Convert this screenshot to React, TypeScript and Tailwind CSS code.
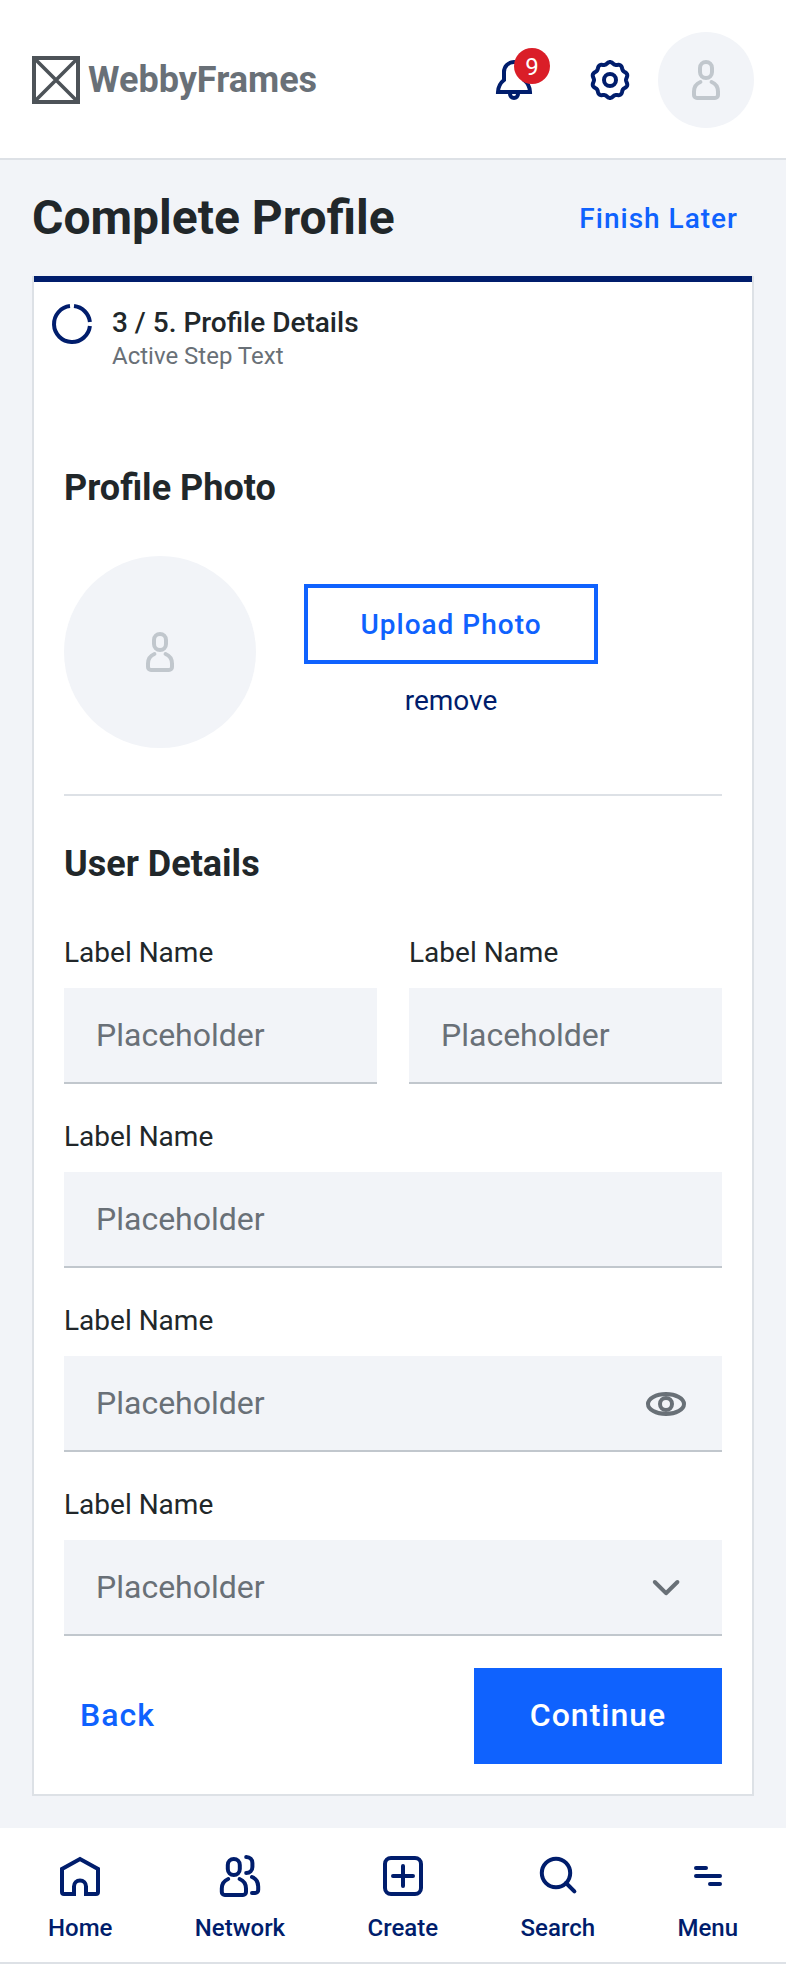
import type { ReactNode } from "react";

function Icon({ children, className = "" }: { children: ReactNode; className?: string }) {
  return (
    <svg
      viewBox="0 0 24 24"
      className={`size-12 shrink-0 ${className}`}
      fill="none"
      stroke="currentColor"
      strokeWidth={2}
    >
      {children}
    </svg>
  );
}

function UserIcon() {
  return (
    <Icon className="text-[#c1c7cd]">
      <rect x="9" y="3" width="6" height="8" rx="3" />
      <path
        strokeLinecap="round"
        d="M9.2 13C7.3 13.8 6 15.6 6 17.8V19.5A1.5 1.5 0 0 0 7.5 21h9a1.5 1.5 0 0 0 1.5-1.5v-1.7c0-2.2-1.3-4-3.2-4.8"
      />
    </Icon>
  );
}

const gearPath = (() => {
  const points: string[] = [];
  for (let deg = 0; deg < 360; deg += 2) {
    const a = (deg * Math.PI) / 180;
    const wave = Math.cos(10 * a);
    const r = 8.5 + 0.5 * wave;
    points.push(`${(12 + r * Math.sin(a)).toFixed(2)} ${(12 - r * Math.cos(a)).toFixed(2)}`);
  }
  return `M${points.join("L")}Z`;
})();

function Header() {
  return (
    <header className="flex h-40 items-center justify-between border-b-2 border-[#dde1e6] bg-white px-8 pt-0.5">
      <div className="flex items-center gap-2">
        <svg viewBox="0 0 48 48" className="size-12" fill="none" stroke="#4d5358" strokeWidth={4}>
          <rect x="2" y="2" width="44" height="44" />
          <path d="M4 4l40 40M44 4L4 44" strokeWidth={3.6} />
        </svg>
        <span className="text-4xl leading-10 font-bold text-[#697077]">WebbyFrames</span>
      </div>
      <div className="flex items-center gap-6 text-[#001d6c]">
        <div className="relative mr-6">
          <Icon>
            <path d="M7 8a5 5 0 0 1 10 0v4c1.8 1.4 2.9 3.4 3 6H4c.1-2.600 1.200-4.600 3-6z" />
            <path d="M10 18.500V19a2 2 0 0 0 4 0v-.5" />
          </Icon>
          <span className="absolute -top-2 left-6 flex size-9 items-center justify-center rounded-full bg-[#da1e28] pt-0.5 text-2xl text-white">
            9
          </span>
        </div>
        <Icon>
          <path d={gearPath} strokeLinejoin="round" />
          <circle cx="12" cy="12" r="3" />
        </Icon>
        <div className="flex size-24 items-center justify-center rounded-full bg-[#f2f4f8]">
          <UserIcon />
        </div>
      </div>
    </header>
  );
}

function Field({ icon }: { icon?: ReactNode }) {
  return (
    <label className="flex flex-1 flex-col gap-3.5">
      <span className="text-[28px] leading-[42px]">Label Name</span>
      <span className="flex h-24 items-center justify-between bg-[#f2f4f8] px-8 text-[32px] text-[#697077] shadow-[inset_0_-2px_0_#c1c7cd]">
        <span className="pb-0.5">Placeholder</span>
        {icon}
      </span>
    </label>
  );
}

function NavItem({ label, children }: { label: string; children: ReactNode }) {
  return (
    <a className="flex flex-col items-center gap-3">
      <Icon>{children}</Icon>
      <span className="text-2xl leading-8 font-medium">{label}</span>
    </a>
  );
}

function BottomNav() {
  return (
    <nav className="flex h-[136px] justify-between border-b-2 border-[#dde1e6] bg-white px-12 pt-6 text-[#001d6c]">
      <NavItem label="Home">
        <path d="M15 21v-3.800a3 3 0 0 0-6 0V21H4a1 1 0 0 1-1-1V8.500L12 3.500l9 5V20a1 1 0 0 1-1 1z" />
      </NavItem>
      <NavItem label="Network">
        <rect x="5.900" y="3.500" width="6" height="8" rx="3" />
        <path
          strokeLinecap="round"
          d="M6.100 13.500C4.200 14.300 2.900 16.100 2.900 18.300V20a1.500 1.500 0 0 0 1.500 1.500h9.100A1.500 1.500 0 0 0 15 20v-1.700c0-2.200-1.300-4-3.200-4.800"
        />
        <path strokeLinecap="round" d="M15.100 2.500c1.900.1 3.100 1.300 3.100 3v2c0 1.700-1.300 2.900-3.100 3" />
        <path strokeLinecap="round" d="M18 12.500c1.900.8 3.100 2.500 3.100 4.700V19a1.500 1.500 0 0 1-1.500 1.500H18" />
      </NavItem>
      <NavItem label="Create">
        <rect x="3" y="3" width="18" height="18" rx="3" />
        <path strokeLinecap="round" d="M7 12h10M12 7v10" />
      </NavItem>
      <NavItem label="Search">
        <circle cx="11" cy="10.500" r="7.100" />
        <path strokeLinecap="round" d="M16 15.500l4.200 4.200" />
      </NavItem>
      <NavItem label="Menu">
        <path strokeLinecap="round" d="M6 8h5M6 12h12M13 16h5" />
      </NavItem>
    </nav>
  );
}

export default function App() {
  return (
    <div className="flex h-[1964px] w-[786px] flex-col bg-[#f2f4f8] font-[Roboto,sans-serif] text-[#21272a]">
      <Header />

      <div className="flex h-[116px] shrink-0 items-center justify-between px-8">
        <h1 className="text-5xl font-bold">Complete Profile</h1>
        <button className="px-4 pt-0.5 text-[28px] font-medium tracking-[1px] text-[#0f62fe]">Finish Later</button>
      </div>

      <main className="mx-8 flex h-[1520px] shrink-0 flex-col border-x-2 border-b-2 border-[#dde1e6] bg-white">
        <div className="flex h-[186px] shrink-0 gap-4 border-t-[6px] border-[#001d6c] px-3.5 pt-[18px]">
          <Icon className="text-[#001d6c]">
            <path d="M13 3.050A9 9 0 0 1 20.950 11M20.950 13A9 9 0 1 1 11 3.050" />
          </Icon>
          <div className="pt-[7px]">
            <div className="text-[28px] leading-[31px] font-medium">3 / 5. Profile Details</div>
            <div className="mt-px text-2xl leading-[34px] text-[#697077]">Active Step Text</div>
          </div>
        </div>

        <div className="flex flex-col px-[30px] pt-1.5">
          <h2 className="text-4xl leading-10 font-bold">Profile Photo</h2>
          <div className="mt-12 flex items-center gap-12">
            <div className="flex size-48 items-center justify-center rounded-full bg-[#f2f4f8]">
              <UserIcon />
            </div>
            <div className="flex flex-col items-center gap-4">
              <button className="h-20 w-[294px] border-4 border-[#0f62fe] pt-px text-[28px] font-medium tracking-[1px] text-[#0f62fe]">
                Upload Photo
              </button>
              <a className="-mb-0.5 text-[28px] leading-[42px] text-[#001d6c]">remove</a>
            </div>
          </div>
          <hr className="mt-[46px] border-t-2 border-[#dde1e6]" />

          <h2 className="mt-12 text-4xl leading-10 font-bold">User Details</h2>
          <form className="mt-12 flex flex-col gap-8">
            <div className="flex gap-8">
              <Field />
              <Field />
            </div>
            <Field />
            <Field
              icon={
                <Icon>
                  <ellipse cx="12" cy="12" rx="9" ry="5" />
                  <circle cx="12" cy="12" r="3" />
                </Icon>
              }
            />
            <Field
              icon={
                <Icon>
                  <path strokeLinecap="round" strokeLinejoin="round" d="M6.400 9L12 14.600 17.700 9" />
                </Icon>
              }
            />
            <div className="flex h-24 items-center justify-between text-[32px] font-medium tracking-[1px]">
              <button type="button" className="px-4 pb-0.5 text-[#0f62fe]">
                Back
              </button>
              <button type="button" className="h-24 w-[248px] bg-[#0f62fe] pb-0.5 text-white">
                Continue
              </button>
            </div>
          </form>
        </div>
      </main>

      <div className="h-8 shrink-0" />
      <BottomNav />
    </div>
  );
}
